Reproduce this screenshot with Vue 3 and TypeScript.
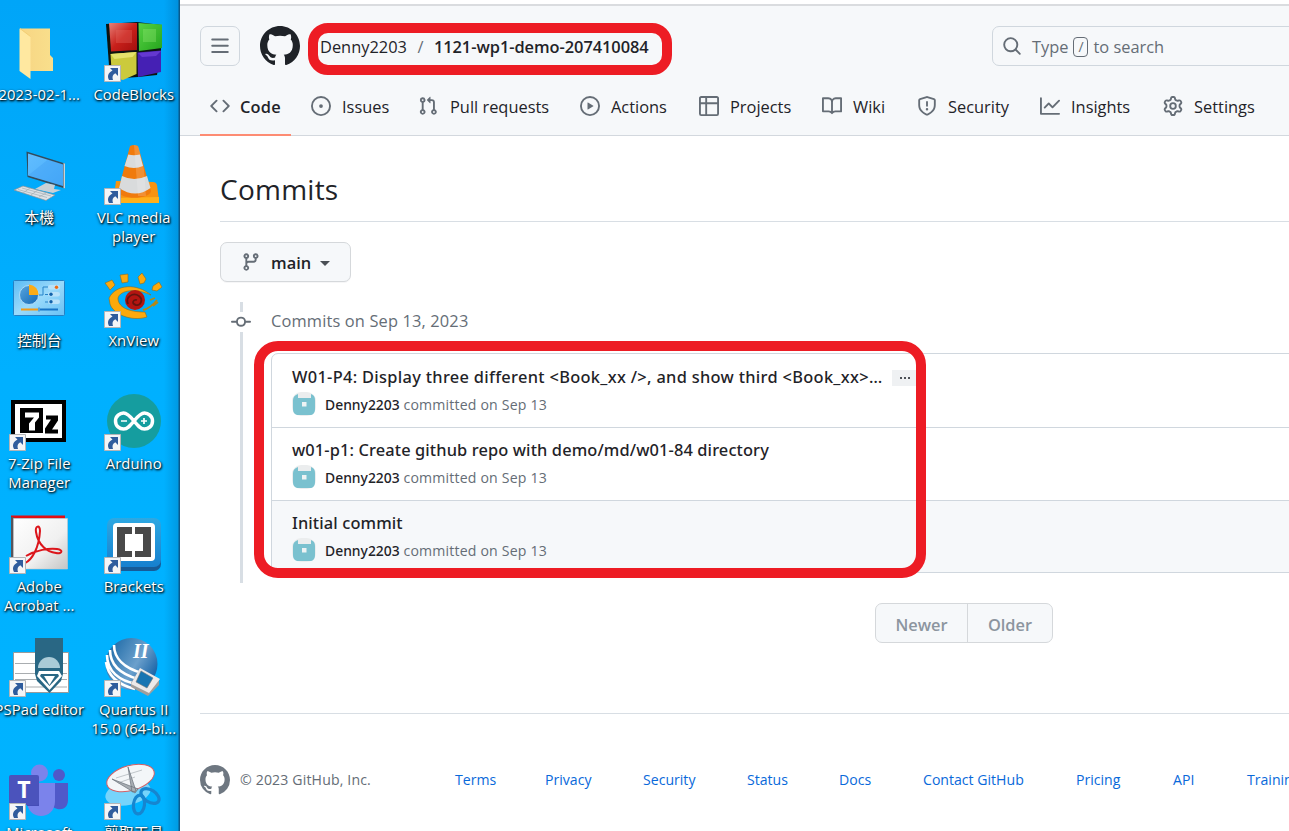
<script setup lang="ts">
interface Tab {
  label: string
  icon: string
}

interface Shortcut {
  id: string
  lines: string[]
  linked: boolean
}

interface Commit {
  title: string
  truncated: boolean
  root: boolean
}

const icons: Record<string, string> = {
  bars: 'M1 2.75A.75.75 0 0 1 1.75 2h12.5a.75.75 0 0 1 0 1.5H1.75A.75.75 0 0 1 1 2.75Zm0 5A.75.75 0 0 1 1.75 7h12.5a.75.75 0 0 1 0 1.5H1.75A.75.75 0 0 1 1 7.75ZM1.75 12h12.5a.75.75 0 0 1 0 1.5H1.75a.75.75 0 0 1 0-1.5Z',
  mark: 'M8 0c4.42 0 8 3.58 8 8a8.013 8.013 0 0 1-5.45 7.59c-.4.08-.55-.17-.55-.38 0-.27.01-1.13.01-2.2 0-.75-.25-1.23-.54-1.48 1.78-.2 3.65-.88 3.65-3.95 0-.88-.31-1.59-.82-2.15.08-.2.36-1.02-.08-2.12 0 0-.67-.22-2.2.82-.64-.18-1.32-.27-2-.27-.68 0-1.36.09-2 .27-1.53-1.03-2.2-.82-2.2-.82-.44 1.1-.16 1.92-.08 2.12-.51.56-.82 1.28-.82 2.15 0 3.06 1.86 3.75 3.64 3.95-.23.2-.44.55-.51 1.07-.46.21-1.61.55-2.33-.66-.15-.24-.6-.83-1.23-.82-.67.01-.27.38.01.53.34.19.73.9.82 1.13.16.45.68 1.31 2.69.94 0 .67.01 1.3.01 1.49 0 .21-.15.45-.55.38A7.995 7.995 0 0 1 0 8c0-4.42 3.58-8 8-8Z',
  code: 'm11.28 3.22 4.25 4.25a.75.75 0 0 1 0 1.06l-4.25 4.25a.749.749 0 0 1-1.275-.326.749.749 0 0 1 .215-.734L13.94 8l-3.72-3.72a.749.749 0 0 1 .326-1.275.749.749 0 0 1 .734.215Zm-6.56 0a.751.751 0 0 1 1.042.018.751.751 0 0 1 .018 1.042L2.06 8l3.72 3.72a.749.749 0 0 1-.326 1.275.749.749 0 0 1-.734-.215L.47 8.53a.75.75 0 0 1 0-1.06Z',
  issue: 'M8 9.5a1.5 1.5 0 1 0 0-3 1.5 1.5 0 0 0 0 3ZM8 0a8 8 0 1 1 0 16A8 8 0 0 1 8 0ZM1.5 8a6.5 6.5 0 1 0 13 0 6.5 6.5 0 0 0-13 0Z',
  pull: 'M1.5 3.25a2.25 2.25 0 1 1 3 2.122v5.256a2.251 2.251 0 1 1-1.5 0V5.372A2.25 2.25 0 0 1 1.5 3.25Zm5.677-.177L9.573.677A.25.25 0 0 1 10 .854V2.5h1A2.5 2.5 0 0 1 13.5 5v5.628a2.251 2.251 0 1 1-1.5 0V5a1 1 0 0 0-1-1h-1v1.646a.25.25 0 0 1-.427.177L7.177 3.427a.25.25 0 0 1 0-.354ZM3.75 2.5a.75.75 0 1 0 0 1.5.75.75 0 0 0 0-1.5Zm0 9.5a.75.75 0 1 0 0 1.5.75.75 0 0 0 0-1.5Zm8.25.75a.75.75 0 1 0 1.5 0 .75.75 0 0 0-1.5 0Z',
  play: 'M8 0a8 8 0 1 1 0 16A8 8 0 0 1 8 0ZM1.5 8a6.5 6.5 0 1 0 13 0 6.5 6.5 0 0 0-13 0Zm4.879-2.773 4.264 2.559a.25.25 0 0 1 0 .428l-4.264 2.559A.25.25 0 0 1 6 10.559V5.442a.25.25 0 0 1 .379-.215Z',
  table: 'M0 1.75C0 .784.784 0 1.75 0h12.5C15.216 0 16 .784 16 1.75v12.5A1.75 1.75 0 0 1 14.25 16H1.75A1.75 1.75 0 0 1 0 14.25ZM6.5 6.5v8h7.75a.25.25 0 0 0 .25-.25V6.5Zm8-1.5V1.75a.25.25 0 0 0-.25-.25H6.5V5Zm-13 1.5v7.75c0 .138.112.25.25.25H5v-8ZM5 5V1.5H1.75a.25.25 0 0 0-.25.25V5Z',
  book: 'M0 1.75A.75.75 0 0 1 .75 1h4.253c1.227 0 2.317.59 3 1.501A3.743 3.743 0 0 1 11.006 1h4.245a.75.75 0 0 1 .75.75v10.5a.75.75 0 0 1-.75.75h-4.507a2.25 2.25 0 0 0-1.591.659l-.622.621a.75.75 0 0 1-1.06 0l-.622-.621A2.25 2.25 0 0 0 5.258 13H.75a.75.75 0 0 1-.75-.75Zm7.251 10.324.004-5.073-.002-2.253A2.25 2.25 0 0 0 5.003 2.5H1.5v9h3.757a3.75 3.75 0 0 1 1.994.574ZM8.755 4.75l-.004 7.322a3.752 3.752 0 0 1 1.992-.572H14.5v-9h-3.495a2.25 2.25 0 0 0-2.25 2.25Z',
  shield: 'M7.467.133a1.748 1.748 0 0 1 1.066 0l5.25 1.68A1.75 1.75 0 0 1 15 3.48V7c0 1.566-.32 3.182-1.303 4.682-.983 1.498-2.585 2.813-5.032 3.855a1.697 1.697 0 0 1-1.33 0c-2.447-1.042-4.049-2.357-5.032-3.855C1.32 10.182 1 8.566 1 7V3.48a1.75 1.75 0 0 1 1.217-1.667Zm.61 1.429a.25.25 0 0 0-.153 0l-5.25 1.68a.25.25 0 0 0-.174.238V7c0 1.358.275 2.666 1.057 3.86.784 1.194 2.121 2.34 4.366 3.297a.196.196 0 0 0 .154 0c2.245-.956 3.582-2.104 4.366-3.298C13.225 9.666 13.5 8.36 13.5 7V3.48a.251.251 0 0 0-.174-.237l-5.25-1.68ZM8.75 4.75v3a.75.75 0 0 1-1.5 0v-3a.75.75 0 0 1 1.5 0ZM9 10.5a1 1 0 1 1-2 0 1 1 0 0 1 2 0Z',
  graph: 'M1.5 1.75V13.5h13.75a.75.75 0 0 1 0 1.5H.75a.75.75 0 0 1-.75-.75V1.75a.75.75 0 0 1 1.5 0Zm14.28 2.53-5.25 5.25a.75.75 0 0 1-1.06 0L7 7.06 4.28 9.78a.751.751 0 0 1-1.042-.018.751.751 0 0 1-.018-1.042l3.25-3.25a.75.75 0 0 1 1.06 0L10 7.94l4.72-4.72a.751.751 0 0 1 1.042.018.751.751 0 0 1 .018 1.042Z',
  gear: 'M8 0a8.2 8.2 0 0 1 .701.031C9.444.095 9.99.645 10.16 1.29l.288 1.107c.018.066.079.158.212.224.231.114.454.243.668.386.123.082.233.09.299.071l1.103-.303c.644-.176 1.392.021 1.82.63.27.385.506.792.704 1.218.315.675.111 1.422-.364 1.891l-.814.806c-.049.048-.098.147-.088.294.016.257.016.515 0 .772-.01.147.038.246.088.294l.814.806c.475.469.679 1.216.364 1.891a7.977 7.977 0 0 1-.704 1.217c-.428.61-1.176.807-1.82.63l-1.102-.302c-.067-.019-.177-.011-.3.071a5.909 5.909 0 0 1-.668.386c-.133.066-.194.158-.211.224l-.29 1.106c-.168.646-.715 1.196-1.458 1.26a8.006 8.006 0 0 1-1.402 0c-.743-.064-1.289-.614-1.458-1.26l-.289-1.106c-.018-.066-.079-.158-.212-.224a5.738 5.738 0 0 1-.668-.386c-.123-.082-.233-.09-.299-.071l-1.103.303c-.644.176-1.392-.021-1.82-.63a8.12 8.12 0 0 1-.704-1.218c-.315-.675-.111-1.422.363-1.891l.815-.806c.05-.048.098-.147.088-.294a6.214 6.214 0 0 1 0-.772c.01-.147-.038-.246-.088-.294l-.815-.806C.635 6.045.431 5.298.746 4.623a7.92 7.92 0 0 1 .704-1.217c.428-.61 1.176-.807 1.82-.63l1.102.302c.067.019.177.011.3-.071.214-.143.437-.272.668-.386.133-.066.194-.158.211-.224l.29-1.106C6.009.645 6.556.095 7.299.03 7.53.01 7.764 0 8 0Zm-.571 1.525c-.036.003-.108.036-.137.146l-.289 1.105c-.147.561-.549.967-.998 1.189-.173.086-.34.183-.5.29-.417.278-.97.423-1.529.27l-1.103-.303c-.109-.03-.175.016-.195.045-.22.312-.412.644-.573.99-.014.031-.021.11.059.19l.815.806c.411.406.562.957.53 1.456a4.709 4.709 0 0 0 0 .582c.032.499-.119 1.05-.53 1.456l-.815.806c-.081.08-.073.159-.059.19.162.346.353.677.573.989.02.03.085.076.195.046l1.102-.303c.56-.153 1.113-.008 1.53.27.161.107.328.204.501.29.447.222.85.629.997 1.189l.289 1.105c.029.109.101.143.137.146a6.6 6.6 0 0 0 1.142 0c.036-.003.108-.036.137-.146l.289-1.105c.147-.561.549-.967.998-1.189.173-.086.34-.183.5-.29.417-.278.97-.423 1.529-.27l1.103.303c.109.029.175-.016.195-.045.22-.313.411-.644.573-.99.014-.031.021-.11-.059-.19l-.815-.806c-.411-.406-.562-.957-.53-1.456a4.709 4.709 0 0 0 0-.582c-.032-.499.119-1.05.53-1.456l.815-.806c.081-.08.073-.159.059-.19a6.464 6.464 0 0 0-.573-.989c-.02-.03-.085-.076-.195-.046l-1.102.303c-.56.153-1.113.008-1.53-.27a4.44 4.44 0 0 0-.501-.29c-.447-.222-.85-.629-.997-1.189l-.289-1.105c-.029-.11-.101-.143-.137-.146a6.6 6.6 0 0 0-1.142 0ZM11 8a3 3 0 1 1-6 0 3 3 0 0 1 6 0ZM9.5 8a1.5 1.5 0 1 0-3.001.001A1.5 1.5 0 0 0 9.5 8Z',
  search: 'M10.68 11.74a6 6 0 0 1-7.922-8.982 6 6 0 0 1 8.982 7.922l3.04 3.04a.749.749 0 0 1-.326 1.275.749.749 0 0 1-.734-.215ZM11.5 7a4.499 4.499 0 1 0-8.997 0A4.499 4.499 0 0 0 11.5 7Z',
  branch: 'M9.5 3.25a2.25 2.25 0 1 1 3 2.122V6A2.5 2.5 0 0 1 10 8.5H6a1 1 0 0 0-1 1v1.128a2.251 2.251 0 1 1-1.5 0V5.372a2.25 2.25 0 1 1 1.5 0v1.836A2.493 2.493 0 0 1 6 7h4a1 1 0 0 0 1-1v-.628A2.25 2.25 0 0 1 9.5 3.25Zm-6 0a.75.75 0 1 0 1.5 0 .75.75 0 0 0-1.5 0Zm8.25-.75a.75.75 0 1 0 0 1.5.75.75 0 0 0 0-1.5ZM4.25 12a.75.75 0 1 0 0 1.5.75.75 0 0 0 0-1.5Z',
  commit: 'M11.93 8.5a4.002 4.002 0 0 1-7.86 0H.75a.75.75 0 0 1 0-1.5h3.32a4.002 4.002 0 0 1 7.86 0h3.32a.75.75 0 0 1 0 1.5Zm-1.43-.75a2.5 2.5 0 1 0-5 0 2.5 2.5 0 0 0 5 0Z',
}

const tabs: Tab[] = [
  { label: 'Code', icon: 'code' },
  { label: 'Issues', icon: 'issue' },
  { label: 'Pull requests', icon: 'pull' },
  { label: 'Actions', icon: 'play' },
  { label: 'Projects', icon: 'table' },
  { label: 'Wiki', icon: 'book' },
  { label: 'Security', icon: 'shield' },
  { label: 'Insights', icon: 'graph' },
  { label: 'Settings', icon: 'gear' },
]

const shortcuts: Shortcut[] = [
  { id: 'folder', lines: ['2023-02-1...'], linked: false },
  { id: 'codeblocks', lines: ['CodeBlocks'], linked: true },
  { id: 'computer', lines: ['本機'], linked: false },
  { id: 'vlc', lines: ['VLC media', 'player'], linked: true },
  { id: 'control', lines: ['控制台'], linked: false },
  { id: 'xnview', lines: ['XnView'], linked: true },
  { id: 'sevenzip', lines: ['7-Zip File', 'Manager'], linked: true },
  { id: 'arduino', lines: ['Arduino'], linked: true },
  { id: 'acrobat', lines: ['Adobe', 'Acrobat ...'], linked: true },
  { id: 'brackets', lines: ['Brackets'], linked: true },
  { id: 'pspad', lines: ['PSPad editor'], linked: true },
  { id: 'quartus', lines: ['Quartus II', '15.0 (64-bi...'], linked: true },
  { id: 'teams', lines: ['Microsoft'], linked: true },
  { id: 'snip', lines: ['剪取工具'], linked: true },
]

const commits: Commit[] = [
  { title: 'W01-P4: Display three different <Book_xx />, and show third <Book_xx>…', truncated: true, root: false },
  { title: 'w01-p1: Create github repo with demo/md/w01-84 directory', truncated: false, root: false },
  { title: 'Initial commit', truncated: false, root: true },
]

const footerLinks = ['Terms', 'Privacy', 'Security', 'Status', 'Docs', 'Contact GitHub', 'Pricing', 'API', 'Training']
</script>

<template>
  <div class="screen">
    <aside class="desktop">
      <div v-for="s in shortcuts" :key="s.id" class="shortcut">
        <svg class="art" viewBox="0 0 60 60">
          <g v-if="s.id === 'folder'">
            <path d="M11 6.500h30V33l3 3v13H20z" fill="url(#folderBack)" />
            <path d="M10.500 6.500 21.500 14.500V57L10.500 49z" fill="#ffe8a0" />
            <path d="M21.500 14.500 11 6.500" stroke="#f3cf76" />
          </g>
          <g v-else-if="s.id === 'codeblocks'">
            <path d="M2 2 33 0l24 3v26l-4 24-19 2-28 2L4 30z" fill="#0c1410" />
            <path d="M5 1 33 1V28L7 29.500z" fill="url(#cbRed)" />
            <path d="m34.500 1 23.500 1.500V26L35 29z" fill="url(#cbGreen)" />
            <path d="m6.500 32 26-2V52L19 58 8 55z" fill="#cbca3c" />
            <path d="m33.500 30.500 23.500-2V50L34 55z" fill="#4520b4" />
            <path d="m6.500 32 26-2-4 5-18 2z" fill="#e5e36b" />
            <path d="m34 31 23-2-5 5-14 1z" fill="#6438d0" />
            <path d="M12 8h16v13H12z" fill="#e56a62" opacity=".35" />
            <path d="M39 7h13v13H39z" fill="#a0f07f" opacity=".3" />
          </g>
          <g v-else-if="s.id === 'computer'">
            <path d="M17.500 6.500 56 18.500v25L18.500 32z" fill="#344b5c" />
            <path d="M19 8.500 54 19.500V41L19 30.500z" fill="url(#screenBlue)" />
            <path d="m19 30.500 20-16L54 19.500V41z" fill="#3191ee" opacity=".25" />
            <path d="m54.500 18 1.500.5v25l-1.500-.5z" fill="#c9d4da" />
            <path d="m37 38 9 2-1 4 7 1-8 3-18-4z" fill="#c9d0d6" />
            <path d="m5 45 9-4 32 9-9 5.500z" fill="#dde2e6" stroke="#8a9197" stroke-width=".7" />
            <path d="m9 44.500 29 8M13 43l29 8M14 48l7-5M22 50l7-5M30 52l7-4" stroke="#a4adb3" stroke-width=".7" />
          </g>
          <g v-else-if="s.id === 'vlc'">
            <path d="m12 36 37 1q3 0 4 3l2 16-4 2H9z" fill="#f79310" />
            <path d="m8 53 47-1v6H10z" fill="#ffb01b" />
            <path d="M26 1q4-2 8 0l13 45c-1 9-32 9-33 0z" fill="#f07a0c" />
            <path d="M24.300 9.500q5.500 1.500 11.500 0L39 21q-9 4-18.500 0zM18 31q12 6 25 0l3.500 12q-15 11-31.500 0z" fill="#d9dbdc" />
            <path d="M30 0q4 0 5 3l5 22 2 26h-8z" fill="#fff" opacity=".16" />
          </g>
          <g v-else-if="s.id === 'control'">
            <rect x="4.500" y="12.500" width="51" height="35" rx="1" fill="url(#panel)" stroke="#2580c4" />
            <circle cx="20" cy="27" r="9.500" fill="url(#pie)" stroke="#bfe3fa" stroke-width=".8" />
            <path d="M20 27V16.500A10 10 0 0 1 29.500 27z" fill="#fbab16" />
            <path d="M30 27h4v-8h5M36 26.500h4M36 34h4" fill="none" stroke="#2783c9" />
            <rect x="39" y="17" width="12" height="4.500" rx="2.200" fill="#b9e2fa" /><circle cx="47.500" cy="19.300" r="1.700" fill="#f06a13" />
            <rect x="39" y="24" width="12" height="4.500" rx="2.200" fill="#b9e2fa" /><circle cx="42" cy="26.300" r="1.700" fill="#1262aa" />
            <rect x="39" y="31.500" width="12" height="4.500" rx="2.200" fill="#b9e2fa" /><circle cx="42" cy="33.800" r="1.700" fill="#1262aa" />
            <path d="M12 41.500h17" stroke="#f39b17" stroke-width="2" /><path d="M31 41.500h18" stroke="#1674c7" stroke-width="2" /><path d="M30 39.500v4" stroke="#1674c7" />
          </g>
          <g v-else-if="s.id === 'xnview'" stroke="#8a6b22" stroke-width=".6">
            <path d="m1 15 7-3 3 5-5 5-2-3zM16 7l8-1v8l-6 1zM34 9l4-4 4 6-2 4-4 1zM49 18l6-4 3 5-5 4-5-1z" fill="#fda90c" />
            <path d="M5 30C12 16 33 15 47 27c-15-7-31-5-33 3 0 9 10 14 27 14l2 5C27 54 9 46 6 36z" fill="#fda90c" />
            <circle cx="31" cy="32" r="10" fill="#b41512" stroke="none" />
            <path d="M24 36c-3-7 5-12 11-8 5 4 1 10-3 9-5-1-3-6 1-5" fill="none" stroke="#65140f" stroke-width="1.800" />
            <path d="m46 32 5-2M49 38l5-4M39 42c5-1 10-5 14-10" fill="none" stroke="#b58715" stroke-width="1.800" />
          </g>
          <g v-else-if="s.id === 'sevenzip'">
            <path d="M2 9h55v42H2z" fill="#000" /><path d="M6 13h47v34H6z" fill="#fff" />
            <path d="M11 17h23v25H11z" fill="#000" />
            <path d="M16 21.500h14v5l-4 5v8h-6v-7l5-6h-9z" fill="#fff" />
            <path d="M37 24.500h12v5l-6 9h6v4H36v-5l6-9h-5z" fill="#000" />
          </g>
          <g v-else-if="s.id === 'arduino'">
            <circle cx="30" cy="30" r="27" fill="#159d9f" />
            <path d="M30 30c-4-5-7-8-10.500-8s-8 3-8 8 4 8 8 8S26 35 30 30s7-8 10.500-8 8 3 8 8-4 8-8 8S34 35 30 30Z" fill="none" stroke="#fff" stroke-width="3.500" />
            <path d="M17 30h6M37 30h6M40 27v6" stroke="#fff" stroke-width="1.700" />
          </g>
          <g v-else-if="s.id === 'acrobat'">
            <path d="M2 1.500h54v3H2z" fill="#e30d12" /><path d="M2 3h3v54H2z" fill="#57545b" />
            <path d="M4.500 4.500h54V55h-54z" fill="url(#paper)" stroke="#c9c9c9" stroke-width=".6" />
            <path d="M16 49c7-3 14-15 15-32 0-7-5-5-4 1 2 13 11 20 20 21 7 1 7-3 1-4-8-1-21 1-31 7" fill="none" stroke="#dc151b" stroke-width="2" />
          </g>
          <g v-else-if="s.id === 'brackets'">
            <rect x="3" y="7" width="54" height="50" rx="7" fill="#165b98" />
            <rect x="3" y="4" width="54" height="49" rx="7" fill="url(#bracketBlue)" />
            <rect x="9" y="9" width="42" height="38" rx="4" fill="#fff" />
            <path d="M13 13h15v7h-7v17h7v6H13zM31 13h16v30H31v-6h8V20h-8z" fill="#494949" />
          </g>
          <g v-else-if="s.id === 'pspad'">
            <path d="M4.500 15.500h55v40h-55z" fill="#fff" stroke="#999b9c" />
            <path d="M6 26.500h52M6 36.500h52M6 42.500h52M6 50h52" stroke="#a9adb0" />
            <path d="M26 1h28v36l-2 7-11.500 12L28 44l-2-7z" fill="#296784" />
            <path d="M29 31a11 11 0 0 1 22 0z" fill="#aacbd7" />
            <path d="M30 34h20l3 5-12.500 14L28 39z" fill="#fff" /><path d="M32 37h17l1 2-9.500 10L31 39z" fill="#296784" /><path d="M35 39h11l-5.500 9z" fill="#fff" />
          </g>
          <g v-else-if="s.id === 'quartus'">
            <circle cx="27.500" cy="27" r="26" fill="url(#globe)" />
            <path d="M10 8c0 13 10 23 28 28M6 13c0 14 10 24 28 29M3 18c0 16 12 26 30 29M2 25c2 15 13 23 29 27" fill="none" stroke="#fff" stroke-width="2.600" />
            <path d="m36 32 19 11v5L44 59 27 50v-4z" fill="#a19e9b" /><path d="m36 31 20 11-11 14-18-9z" fill="#eceaea" />
            <path d="m37 34 12 7-6 10-11-6z" fill="#1875b2" stroke="#777" stroke-width=".6" />
            <text x="29" y="21" class="roman">II</text>
          </g>
          <g v-else-if="s.id === 'teams'">
            <circle cx="30.500" cy="13" r="8.500" fill="#7b83eb" /><circle cx="50" cy="15" r="6" fill="#5059c9" />
            <path d="M40 23h19v17c0 12-14 12-19 2z" fill="#5059c9" /><path d="M18 23h28v18c0 20-28 20-28 0z" fill="#7b83eb" />
            <path d="M18 23h12v23H18z" fill="#454db8" /><rect y="15" width="30" height="30" rx="2" fill="#4b53bc" />
            <text x="15" y="38" class="tee">T</text>
          </g>
          <g v-else>
            <ellipse cx="24" cy="33" rx="23" ry="12" fill="#76d4fb" transform="rotate(-12 24 33)" />
            <ellipse cx="26.500" cy="18" rx="24.500" ry="12.500" fill="#f3f6f8" stroke="#d36066" transform="rotate(-16 26.500 18)" />
            <path d="m12 18 26-8M14 23l17-6" stroke="#c0c6ca" />
            <path d="m24 7 8 24-4 1zM8 19l26 10-3 4z" fill="#a8aeb3" stroke="#687078" stroke-width=".7" />
            <ellipse cx="46" cy="36" rx="10" ry="6" fill="none" stroke="#1686d0" stroke-width="3.200" transform="rotate(32 46 36)" />
            <ellipse cx="35" cy="44.500" rx="5.500" ry="9.500" fill="none" stroke="#1686d0" stroke-width="3.200" transform="rotate(8 35 44.500)" />
          </g>
          <g v-if="s.linked">
            <path d="M.5 43.500h16v16H.5z" fill="#f4f5f7" stroke="#b3b5b8" />
            <path d="M6 46h8v8l-2.700-2.700C8.500 53 8 55 9 58H5c-2-4-1-7 3.500-9.500z" fill="#2f5c9d" />
          </g>
        </svg>
        <div class="caption">
          <span v-for="line in s.lines" :key="line">{{ line }}</span>
        </div>
      </div>
      <svg class="defs" width="0" height="0">
        <defs>
          <linearGradient id="folderBack"><stop stop-color="#f7d583" /><stop offset="1" stop-color="#f9df8c" /></linearGradient>
          <linearGradient id="cbRed" x2="1" y2="1"><stop stop-color="#e68178" /><stop offset=".5" stop-color="#c8201b" /><stop offset="1" stop-color="#a30f0d" /></linearGradient>
          <linearGradient id="cbGreen" x2="1" y2="1"><stop stop-color="#57d244" /><stop offset="1" stop-color="#25a51d" /></linearGradient>
          <linearGradient id="screenBlue" x2="1" y2="1"><stop stop-color="#61bdff" /><stop offset="1" stop-color="#4aaefa" /></linearGradient>
          <linearGradient id="panel" x2="1" y2="1"><stop stop-color="#5cbcf4" /><stop offset=".5" stop-color="#9adafb" /><stop offset="1" stop-color="#68c1f5" /></linearGradient>
          <linearGradient id="pie" x2="1" y2="1"><stop stop-color="#58a6df" /><stop offset="1" stop-color="#1468b4" /></linearGradient>
          <linearGradient id="paper" x2="1" y2="1"><stop stop-color="#fff" /><stop offset=".6" stop-color="#f0f0f0" /><stop offset="1" stop-color="#c5c5c5" /></linearGradient>
          <linearGradient id="bracketBlue" x2="0" y2="1"><stop stop-color="#2ea8e2" /><stop offset="1" stop-color="#1680cf" /></linearGradient>
          <linearGradient id="globe" x2="1" y2=".6"><stop stop-color="#0e60a0" /><stop offset=".65" stop-color="#6ca0cc" /><stop offset="1" stop-color="#1c66a8" /></linearGradient>
        </defs>
      </svg>
    </aside>

    <main class="browser">
      <header class="header">
        <div class="topbar">
          <button class="menu" aria-label="Menu"><svg class="icon" viewBox="0 0 16 16"><path :d="icons.bars" /></svg></button>
          <svg class="logo" viewBox="0 0 16 16"><path :d="icons.mark" /></svg>
          <div class="crumbs"><span class="owner">Denny2203</span><span class="slash">/</span><strong class="repo">1121-wp1-demo-207410084</strong></div>
          <div class="search">
            <svg class="icon" viewBox="0 0 16 16"><path :d="icons.search" /></svg>
            <span class="hint">Type</span><kbd class="key">/</kbd><span class="hint">to search</span>
          </div>
        </div>
        <nav class="tabs">
          <a v-for="(tab, i) in tabs" :key="tab.label" class="tab" :class="{ active: i === 0, pull: tab.icon === 'pull' }">
            <svg class="icon" viewBox="0 0 16 16"><path :d="icons[tab.icon]" fill-rule="evenodd" /></svg>
            <span>{{ tab.label }}</span>
          </a>
        </nav>
      </header>

      <section class="content">
        <h1 class="title">Commits</h1>
        <button class="branch">
          <svg class="icon" viewBox="0 0 16 16"><path :d="icons.branch" /></svg>
          <span>main</span><i class="caret"></i>
        </button>
        <div class="timeline">
          <div class="rail">
            <div class="node"><svg class="icon" viewBox="0 0 16 16"><path :d="icons.commit" /></svg></div>
          </div>
          <div class="day">
            <h2 class="date">Commits on Sep 13, 2023</h2>
            <ol class="commits">
              <li v-for="c in commits" :key="c.title" class="commit" :class="{ root: c.root, truncated: c.truncated }">
                <p class="subject"><span>{{ c.title }}</span><button v-if="c.truncated" class="more" aria-label="Expand"><i></i><i></i><i></i></button></p>
                <div class="meta">
                  <svg class="avatar" viewBox="0 0 24 24">
                    <rect width="24" height="24" rx="9" fill="#ebedee" />
                    <path d="M6 2v4h13V2c3 1 4 3 4 6v9c0 4-2 6-5 6H7c-4 0-6-2-6-6V8c0-3 2-5 5-6Z" fill="#7ac1cf" />
                    <path d="M10 10h4.500v4.500H10z" fill="#eef3f4" />
                  </svg>
                  <span><b>Denny2203</b> committed on Sep 13</span>
                </div>
              </li>
            </ol>
          </div>
        </div>
        <div class="pager"><span class="newer">Newer</span><span class="older">Older</span></div>
      </section>

      <footer class="footer">
        <svg class="mark" viewBox="0 0 16 16"><path :d="icons.mark" /></svg>
        <span class="copyright">© 2023 GitHub, Inc.</span>
        <nav class="links"><a v-for="link in footerLinks" :key="link">{{ link }}</a></nav>
      </footer>
    </main>

    <div class="highlight repo-highlight"></div>
    <div class="highlight list-highlight"></div>
  </div>
</template>

<style>
body {
  overflow: hidden;
}
</style>

<style scoped>
.screen {
  position: relative;
  display: flex;
  width: 1289px;
  height: 831px;
  overflow: hidden;
  font-family: 'Open Sans', 'Noto Sans CJK TC', sans-serif;
  font-size: 16.4px;
  color: #1f2328;
  background: #fff;
}
.screen * {
  box-sizing: border-box;
}
button {
  font: inherit;
  padding: 0;
  color: inherit;
}
.icon {
  width: 20px;
  height: 20px;
  flex: none;
  fill: #656d76;
}

.desktop {
  display: grid;
  flex: none;
  grid-template-columns: 94.500px 94.500px;
  grid-auto-rows: 123px;
  width: 180px;
  height: 831px;
  padding-top: 22px;
  overflow: hidden;
  background: linear-gradient(90deg, transparent 164px, rgba(0, 50, 100, 0.18) 178px, #0a5a8c 179px), linear-gradient(#00a5f8, #00b0ff 45%, #00b3ff);
}
.shortcut {
  display: flex;
  flex-direction: column;
  align-items: center;
  margin-left: -8px;
  margin-right: 8px;
}
.art {
  width: 60px;
  height: 60px;
  flex: none;
}
.defs {
  position: absolute;
}
.caption {
  display: flex;
  flex-direction: column;
  align-items: center;
  margin-top: 3px;
  font-size: 14.800px;
  line-height: 19px;
  letter-spacing: 0.1px;
  color: #fff;
  white-space: nowrap;
  text-shadow: 1px 1px 2px #000, 0 1px 3px rgba(0, 0, 0, 0.7);
}
.roman {
  font: italic bold 20px 'Liberation Serif', serif;
  fill: #fff;
}
.tee {
  font: bold 23px 'Open Sans', sans-serif;
  fill: #fff;
  text-anchor: middle;
}

.browser {
  flex: 1;
  min-width: 0;
  padding-top: 4px;
}
.header {
  height: 132px;
  padding: 20px 0 0 20px;
  border-top: 2px solid #dadcdf;
  background: #f6f8fa;
  box-shadow: inset 0 -1px #d3d8de;
}
.topbar {
  display: flex;
  align-items: center;
  height: 40px;
}
.menu {
  display: flex;
  align-items: center;
  justify-content: center;
  flex: none;
  width: 40px;
  height: 40px;
  border: 1px solid #d0d7de;
  border-radius: 7px;
  background: transparent;
}
.logo {
  flex: none;
  width: 40px;
  height: 40px;
  margin-left: 20px;
  fill: #1f2328;
}
.crumbs {
  display: flex;
  align-items: center;
  flex: none;
  width: 672px;
  margin-left: 20px;
  white-space: nowrap;
}
.slash {
  width: 27px;
  text-align: center;
  color: #656d76;
}
.repo {
  font-weight: 600;
  letter-spacing: -0.05px;
}
.search {
  display: flex;
  align-items: center;
  width: 400px;
  height: 40px;
  flex: none;
  padding-left: 9px;
  border: 1px solid #d0d7de;
  border-radius: 7px;
  color: #656d76;
}
.search .icon {
  margin-right: 10px;
}
.key {
  width: 15px;
  height: 20px;
  margin: 2px 5px 0;
  border: 1px solid #656d76;
  border-radius: 4px;
  font: 14px/18px 'Open Sans', sans-serif;
  text-align: center;
}
.tabs {
  display: grid;
  grid-template-columns: 101px 108px 161px 119px 123px 95px 123px 123px 120px;
  height: 60px;
  margin-top: 10px;
}
.tab {
  display: flex;
  align-items: center;
  gap: 11px;
  padding-left: 10px;
  white-space: nowrap;
}
.tab.pull {
  gap: 12px;
  padding-left: 9px;
}
.tab.active {
  width: 91px;
  gap: 10px;
  border-bottom: 2px solid #fd8c73;
  padding-top: 2px;
  font-weight: 600;
  letter-spacing: 0.2px;
}

.content {
  padding-left: 40px;
}
.title {
  height: 86px;
  margin: 0;
  padding-top: 33px;
  border-bottom: 1px solid #d8dee4;
  font-size: 28px;
  font-weight: 400;
  line-height: 41px;
  letter-spacing: 0.25px;
}
.branch {
  display: flex;
  align-items: center;
  width: 131px;
  height: 40px;
  margin-top: 20px;
  padding-left: 20px;
  border: 1px solid #d5d8db;
  border-radius: 7px;
  font-weight: 600;
  background: #f6f8fa;
  box-shadow: 0 1px rgba(31, 35, 40, 0.04);
}
.branch span {
  margin: 0 9px 0 10px;
}
.caret {
  margin-top: 2px;
  border: 5px solid transparent;
  border-top-color: #4a4f55;
  border-bottom: 0;
}
.timeline {
  display: flex;
  height: 281px;
  margin-top: 20px;
}
.rail {
  width: 3px;
  height: 281px;
  margin-left: 20px;
  padding-top: 10px;
  background: #d8dee4;
}
.node {
  width: 20px;
  height: 20px;
  margin-left: -9px;
  background: #fff;
}
.node .icon {
  display: block;
}
.day {
  flex: 1;
  min-width: 0;
  margin-left: 28px;
}
.date {
  height: 51px;
  margin: 0;
  font-size: 16.400px;
  font-weight: 400;
  line-height: 38px;
  letter-spacing: 0.15px;
  color: #656d76;
}
.commits {
  width: 1100px;
  margin: 0;
  padding: 0;
  overflow: hidden;
  list-style: none;
  border: 1px solid #d0d7de;
  border-radius: 7px;
}
.commit {
  height: 73px;
  padding: 10px 0 0 20px;
}
.commit + .commit {
  padding-top: 9px;
  border-top: 1px solid #d0d7de;
}
.commit.root {
  height: 72px;
  background: #f6f8fa;
}
.subject {
  display: flex;
  align-items: center;
  height: 26px;
  margin: 0;
  font-family: 'Noto Sans', 'Open Sans', sans-serif;
  font-weight: 500;
  line-height: 26px;
  letter-spacing: 0.12px;
  white-space: nowrap;
}
.truncated .subject {
  letter-spacing: 0.31px;
}
.more {
  display: flex;
  align-items: center;
  justify-content: center;
  gap: 2px;
  width: 25px;
  height: 16px;
  margin: 2px 0 0 10px;
  border: 0;
  background: #eff1f3;
}
.more i {
  width: 2px;
  height: 2px;
  background: #4c5157;
}
.meta {
  display: flex;
  align-items: center;
  gap: 9px;
  height: 28px;
  font-size: 14.100px;
  letter-spacing: 0.18px;
  color: #656d76;
}
.meta b {
  font-family: 'Noto Sans', 'Open Sans', sans-serif;
  font-size: 13.900px;
  font-weight: 500;
  letter-spacing: 0;
  color: #1f2328;
}
.avatar {
  width: 24px;
  height: 24px;
}
.pager {
  display: flex;
  width: 178px;
  height: 40px;
  margin: 20px 0 0 655px;
  border: 1px solid #d5d8db;
  border-radius: 7px;
  font-weight: 600;
  line-height: 41px;
  text-align: center;
  color: #8c959f;
  background: #f6f8fa;
}
.newer {
  width: 92px;
  height: 38px;
  border-right: 1px solid #d5d8db;
}
.older {
  flex: 1;
}

.footer {
  display: flex;
  align-items: center;
  height: 132px;
  margin: 70px 0 0 20px;
  border-top: 1px solid #d8dee4;
  font-size: 14.100px;
  white-space: nowrap;
}
.mark {
  width: 30px;
  height: 30px;
  flex: none;
  fill: #6e7781;
}
.copyright {
  width: 215px;
  flex: none;
  margin-left: 10px;
  letter-spacing: 0.15px;
  color: #656d76;
}
.links {
  display: grid;
  grid-template-columns: 90px 98px 104px 92px 84px 153px 97px 74px 80px;
  color: #0969da;
}

/* Hand-drawn emphasis frames laid over the page. */
.highlight {
  position: absolute;
  box-sizing: border-box;
  border: 10px solid #ed1c24;
}
.repo-highlight {
  left: 308px;
  top: 23px;
  width: 364px;
  height: 52px;
  border-radius: 20px;
}
.list-highlight {
  left: 254px;
  top: 341px;
  width: 672px;
  height: 237px;
  border-radius: 24px;
}
</style>
